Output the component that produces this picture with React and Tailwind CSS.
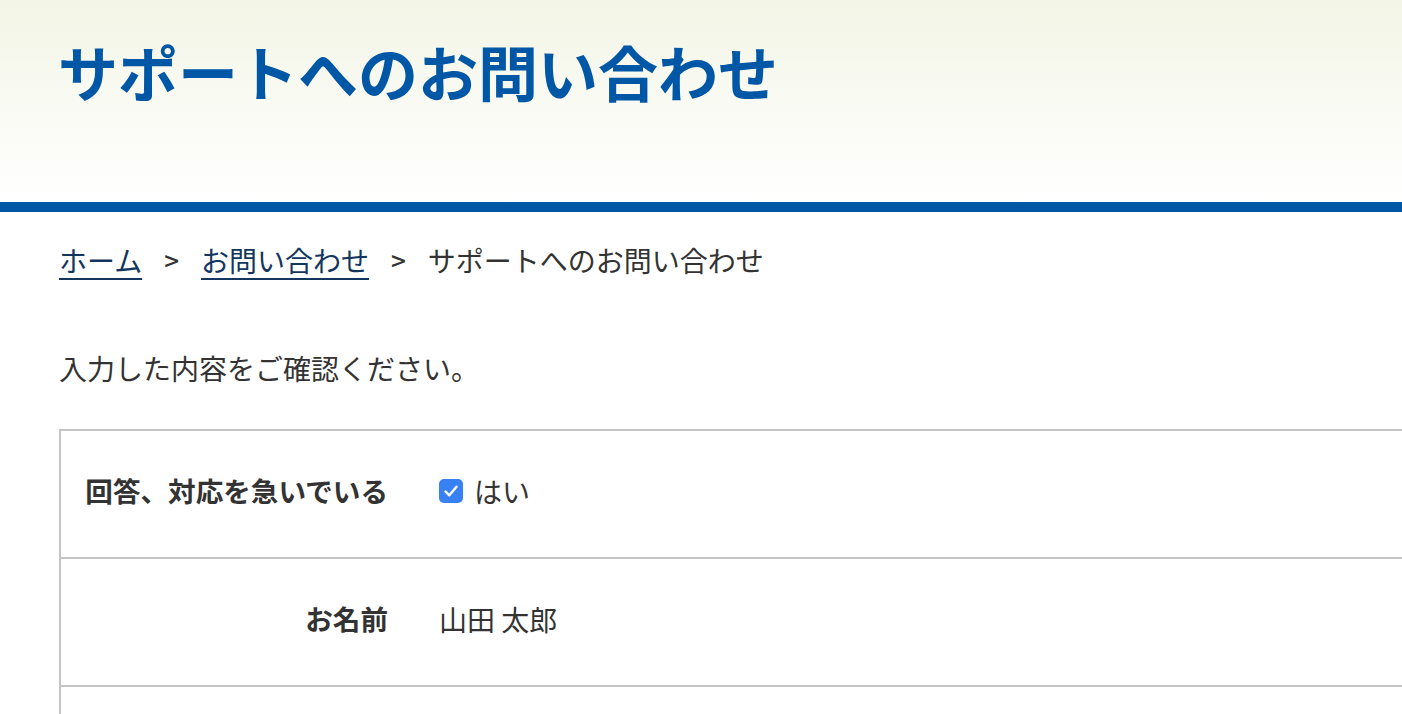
import React from 'react';

const rows = [
    { label: '回答、対応を急いでいる', value: 'はい', checkbox: true },
    { label: 'お名前', value: '山田 太郎' },
    { label: '', value: '' },
];

const CheckIcon = () => (
    <span className="inline-flex items-center justify-center w-[24px] h-[24px] rounded-[5px] bg-[#3781f5]">
        <svg width="24" height="24" viewBox="0 0 24 24" fill="none">
            <path d="M6.5 12.5l3.8 3.8 7.2-8.6" stroke="white" strokeWidth="2.4" strokeLinecap="round" strokeLinejoin="round" />
        </svg>
    </span>
);

const App = () => {
    return (
        <div className="w-[1402px] h-[714px] overflow-hidden bg-white text-[#333] font-['Noto_Sans_CJK_JP','Noto_Sans',sans-serif]">
            {/* ヘッダー */}
            <header className="h-[212px] border-b-[10px] border-[#0057a6] bg-gradient-to-b from-[#f3f5e6] to-white">
                <h1 className="pl-[58px] pt-[41px] text-[60px] leading-none font-bold text-[#0057a6]">
                    サポートへのお問い合わせ
                </h1>
            </header>

            {/* パンくず */}
            <nav className="pl-[59px] pt-[28px] text-[28px] leading-[40px] flex items-center">
                <a href="#" className="text-[#12365e] underline underline-offset-[6px] decoration-[2px]">ホーム</a>
                <span className="mx-[22px] text-[26px] font-medium">&gt;</span>
                <a href="#" className="text-[#12365e] underline underline-offset-[6px] decoration-[2px]">お問い合わせ</a>
                <span className="mx-[22px] text-[26px] font-medium">&gt;</span>
                <span>サポートへのお問い合わせ</span>
            </nav>

            <p className="pl-[59px] mt-[68px] text-[28px] leading-[40px]">入力した内容をご確認ください。</p>

            {/* 確認テーブル */}
            <div className="ml-[59px] mt-[41px] w-[1400px] border-t-2 border-l-2 border-[#c4c4c4]">
                {rows.map((row, i) => (
                    <div key={i} className="flex h-[128px] pb-[6px] border-b-2 border-[#c4c4c4] items-center">
                        <div className="w-[351px] px-[24px] text-right text-[27.6px] font-bold">{row.label}</div>
                        <div className="pl-[27px] flex items-center gap-[11px] text-[28px]">
                            {row.checkbox && <CheckIcon />}
                            <span>{row.value}</span>
                        </div>
                    </div>
                ))}
            </div>
        </div>
    );
};

export default App;
